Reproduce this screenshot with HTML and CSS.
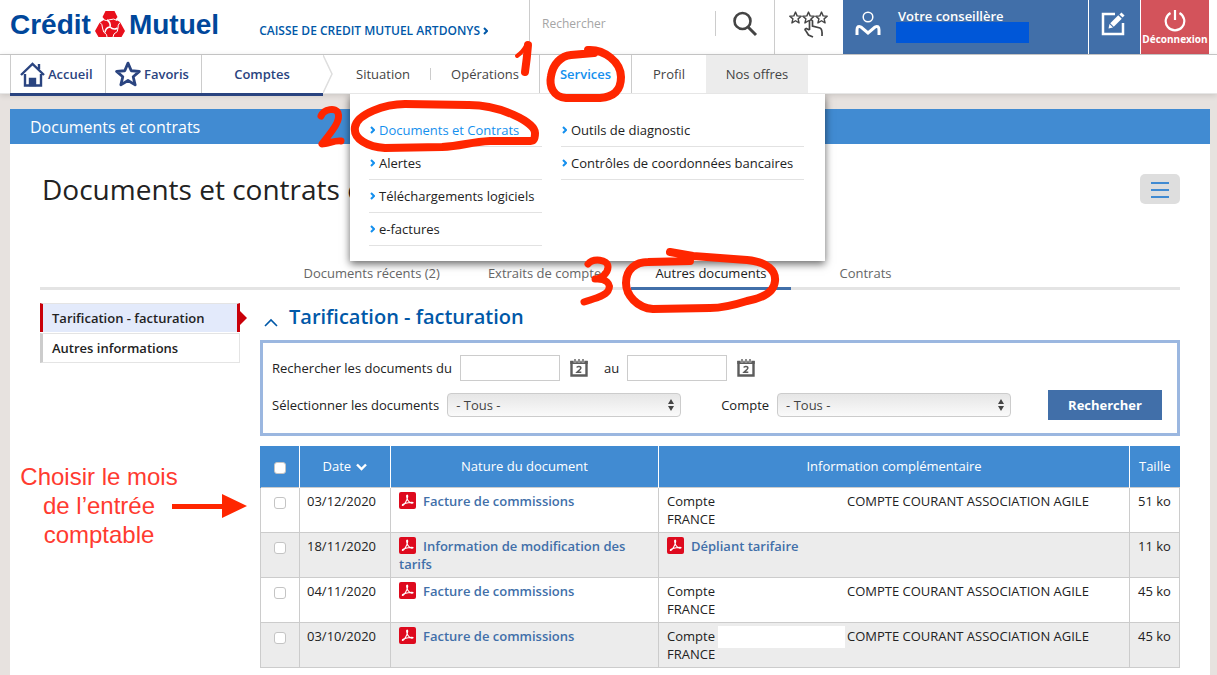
FILE: index.html
```html
<!DOCTYPE html>
<html lang="fr">
<head>
<meta charset="utf-8">
<title>Documents et contrats</title>
<link rel="stylesheet" href="styles.css">
</head>
<body>
<svg class="defs" aria-hidden="true">
  <symbol id="pdf" viewBox="0 0 17 17"><rect width="17" height="17" rx="2" fill="#de0a1e"/><path d="M3.4 13.4C2.6 12.4 7.600 10.600 12.800 10.300C15 10.300 14 11.800 12 10.900C9.800 9.800 7.800 6.600 7.600 4.200C7.600 2.600 8.900 2.800 8.700 4.600C8.500 7 5.400 13.800 3.400 13.400Z" fill="none" stroke="#fff" stroke-width="1.1"/></symbol>
  <symbol id="cal" viewBox="0 0 18 18"><path d="M1.500 3H16.500V16.500H1.500Z" fill="none" stroke="#5c5c5c" stroke-width="2.400"/><path d="M0.300 2H17.700V5H0.300Z" fill="#5c5c5c"/><path d="M5 0V3.500M9 0V3.500M13 0V3.500" stroke="#fff" stroke-width="2.600"/><path d="M5 0V3.500M9 0V3.500M13 0V3.500" stroke="#5c5c5c" stroke-width="1.400"/><path d="M6.800 8.600C7.300 7 11 7 10.800 9.200C10.700 10.500 8 12 7 13.200H11.300" fill="none" stroke="#5c5c5c" stroke-width="1.600"/></symbol>
  <symbol id="updown" viewBox="0 0 8 12"><path d="M4 0L7 5H1ZM4 12L7 7H1Z" fill="#444"/></symbol>
  <symbol id="chev" viewBox="0 0 5 8"><path d="M1 1L4 4L1 7" fill="none" stroke="currentColor" stroke-width="2"/></symbol>
  <symbol id="star" viewBox="0 0 24 24"><path d="M12 2L15 9L22.500 9.600L16.800 14.500L18.600 22L12 18L5.400 22L7.200 14.500L1.500 9.600L9 9Z" fill="none" stroke="currentColor" stroke-width="2.600" stroke-linejoin="round"/></symbol>
</svg>

<header class="top">
  <a class="logo" href="#" aria-label="Crédit Mutuel">
    <span>Crédit</span>
    <svg width="30" height="26" viewBox="0 0 30 26" aria-hidden="true"><path d="M10.500 0H19.500L22.500 6L20.500 8.500L25 11L30 20L26.500 26H3.500L0 20L5 11L9.500 8.500L7.500 6Z" fill="#e8101c"/><path d="M15 16Q16 11.500 12 9M15 16Q10.500 16.500 10 21.500M15 16Q18.500 19.500 22.500 17" fill="none" stroke="#fff" stroke-width="1.500"/><path d="M4.500 11.500L8 8.500Q11 10.500 15 8.700Q19 7 22 9.500M25 11.500Q22.500 14 23 17Q23.500 21 19 23L18 26M12 26L11.500 23.500Q8 22 7.500 17Q7.500 13 5 11.500" fill="none" stroke="#fff" stroke-width="1"/></svg>
    <span>Mutuel</span>
  </a>
  <a class="agency" href="#">CAISSE DE CREDIT MUTUEL ARTDONYS <svg width="5" height="8"><use href="#chev"/></svg></a>
  <form class="search">
    <input type="text" placeholder="Rechercher" aria-label="Rechercher">
    <button type="button" aria-label="Lancer la recherche"><svg width="26" height="26" viewBox="0 0 26 26"><circle cx="10.500" cy="10" r="8" fill="none" stroke="#444" stroke-width="2.600"/><path d="M16 16L24 24" stroke="#444" stroke-width="3"/></svg></button>
  </form>
  <a class="rate" href="#" aria-label="Avis"><svg width="40" height="28" viewBox="0 0 40 28"><g color="#444"><use href="#star" width="13" height="13"/><use href="#star" x="13" width="13" height="13"/><use href="#star" x="26" width="13" height="13"/></g><path d="M20.500 19V10Q22 7.500 23.500 10V15L31 17Q33.500 18 33 25M20.500 19L17 17.500Q15 18 17 20L19.500 24L24 26" fill="#fff" stroke="#444" stroke-width="1.700"/></svg></a>
  <a class="advisor" href="#">
    <svg width="26" height="26" viewBox="0 0 26 26" fill="none" stroke="#fff"><circle cx="13" cy="6" r="4.800" stroke-width="1.500"/><path d="M2 24V19Q2 14 6 16L13 22L20 16Q24 14 24 19V24" stroke-width="3"/></svg>
    <span><span class="advisor-label">Votre conseillère</span><span class="mask-blue"></span></span>
  </a>
  <a class="edit" href="#" aria-label="Écrire"><svg width="24" height="24" viewBox="0 0 24 24" fill="none" stroke="#fff"><path d="M14 2H2V22H22V11" stroke-width="2.500"/><path d="M11 13L19 5" stroke-width="5"/><path d="M7.500 16.500L8.500 12L12 15.500Z" fill="#fff" stroke="none"/><path d="M20 4L22 2" stroke-width="4.500"/></svg></a>
  <a class="logout" href="#"><svg width="22" height="22" viewBox="0 0 22 22" fill="none" stroke="#fff" stroke-width="2.200"><path d="M6.500 3A9.300 9.300 0 1 0 15.500 3M11 0V10"/></svg><span>Déconnexion</span></a>
</header>

<nav class="nav">
  <div class="nav-main">
    <a class="home" href="#"><svg width="25" height="25" viewBox="0 0 25 25" fill="none" stroke="#2a4480" stroke-width="2.400"><path d="M1 13L12.500 2L24 13M5 12V23.500H21V12M19 7V2"/><path d="M10 23V17H15V23Z" fill="#2a4480"/></svg>Accueil</a>
    <a class="fav" href="#"><svg width="26" height="26"><use href="#star"/></svg>Favoris</a>
    <a class="accounts" href="#">Comptes</a>
  </div>
  <svg class="nav-arrow" width="12" height="38" viewBox="0 0 12 38" aria-hidden="true"><path d="M0 0L9 19L0 38Z" fill="#fff"/><path d="M0 0L9 19L0 38" fill="none" stroke="#dedede" stroke-width="1.500"/></svg>
  <a class="situation" href="#">Situation</a>
  <a class="operations" href="#">Opérations</a>
  <div class="services">
    <a href="#">Services</a>
    <div class="mega">
      <ul>
        <li><a class="current" href="#"><svg width="5" height="8"><use href="#chev"/></svg>Documents et Contrats</a></li>
        <li><a href="#"><svg width="5" height="8"><use href="#chev"/></svg>Alertes</a></li>
        <li><a href="#"><svg width="5" height="8"><use href="#chev"/></svg>Téléchargements logiciels</a></li>
        <li><a href="#"><svg width="5" height="8"><use href="#chev"/></svg>e-factures</a></li>
      </ul>
      <ul>
        <li><a href="#"><svg width="5" height="8"><use href="#chev"/></svg>Outils de diagnostic</a></li>
        <li><a href="#"><svg width="5" height="8"><use href="#chev"/></svg>Contrôles de coordonnées bancaires</a></li>
      </ul>
    </div>
  </div>
  <a class="profile" href="#">Profil</a>
  <a class="offers" href="#">Nos offres</a>
</nav>

<main class="page">
  <div class="crumb">Documents et contrats</div>
  <div class="content">
    <div class="title-row">
      <h1>Documents et contrats e</h1>
      <button class="menu" type="button" aria-label="Menu"><svg width="18" height="18" viewBox="0 0 18 18"><path d="M0 2H18M0 9H18M0 16H18" stroke="#418bd2" stroke-width="2"/></svg></button>
    </div>
    <div class="tabs">
      <a href="#">Documents récents (2)</a>
      <a href="#">Extraits de comptes</a>
      <a class="active" href="#">Autres documents</a>
      <a href="#">Contrats</a>
    </div>
    <div class="columns">
      <aside class="side">
        <a class="active" href="#">Tarification - facturation</a>
        <a href="#">Autres informations</a>
        <p class="note">Choisir le mois<br>de l’entrée<br>comptable</p>
      </aside>
      <section class="main">
        <h2><svg width="14" height="9" viewBox="0 0 14 9"><path d="M1 8L7 2L13 8" fill="none" stroke="#0058a8" stroke-width="1.600"/></svg>Tarification - facturation</h2>
        <form class="filter">
          <div class="row">
            <label for="from">Rechercher les documents du</label>
            <input id="from" type="text">
            <button class="cal" type="button" aria-label="Date de début"><svg width="18" height="18"><use href="#cal"/></svg></button>
            <label class="to" for="to">au</label>
            <input id="to" type="text">
            <button class="cal" type="button" aria-label="Date de fin"><svg width="18" height="18"><use href="#cal"/></svg></button>
          </div>
          <div class="row">
            <label for="docs">Sélectionner les documents</label>
            <span class="select"><select id="docs"><option>- Tous -</option></select><svg width="8" height="12"><use href="#updown"/></svg></span>
            <label class="account" for="account">Compte</label>
            <span class="select"><select id="account"><option>- Tous -</option></select><svg width="8" height="12"><use href="#updown"/></svg></span>
            <button class="submit" type="button">Rechercher</button>
          </div>
        </form>
        <table>
          <colgroup><col class="c-check"><col class="c-date"><col class="c-kind"><col><col class="c-size"></colgroup>
          <thead><tr>
            <th><input type="checkbox" aria-label="Tout sélectionner"></th>
            <th>Date <svg class="sort" width="11" height="8" viewBox="0 0 11 8"><path d="M1 1.500L5.500 6L10 1.500" fill="none" stroke="#fff" stroke-width="2.400"/></svg></th>
            <th>Nature du document</th><th>Information complémentaire</th><th>Taille</th>
          </tr></thead>
          <tbody>
            <tr><td><input type="checkbox" aria-label="03/12/2020"></td><td>03/12/2020</td><td><a href="#"><svg class="pdf"><use href="#pdf"/></svg>Facture de commissions</a></td><td>Compte<span class="gap"></span>COMPTE COURANT ASSOCIATION AGILE<br>FRANCE</td><td>51 ko</td></tr>
            <tr><td><input type="checkbox" aria-label="18/11/2020"></td><td>18/11/2020</td><td><a href="#"><svg class="pdf"><use href="#pdf"/></svg>Information de modification des tarifs</a></td><td><a href="#"><svg class="pdf"><use href="#pdf"/></svg>Dépliant tarifaire</a></td><td>11 ko</td></tr>
            <tr><td><input type="checkbox" aria-label="04/11/2020"></td><td>04/11/2020</td><td><a href="#"><svg class="pdf"><use href="#pdf"/></svg>Facture de commissions</a></td><td>Compte<span class="gap"></span>COMPTE COURANT ASSOCIATION AGILE<br>FRANCE</td><td>45 ko</td></tr>
            <tr><td><input type="checkbox" aria-label="03/10/2020"></td><td>03/10/2020</td><td><a href="#"><svg class="pdf"><use href="#pdf"/></svg>Facture de commissions</a></td><td>Compte<span class="gap masked"></span>COMPTE COURANT ASSOCIATION AGILE<br>FRANCE</td><td>45 ko</td></tr>
          </tbody>
        </table>
      </section>
    </div>
  </div>
</main>

<svg class="marks" width="1217" height="675" viewBox="0 0 1217 675" aria-hidden="true">
  <g fill="none" stroke="#ff2600" stroke-width="8" stroke-linecap="round" stroke-linejoin="round">
    <path d="M517 56Q523 52 527 44" stroke-width="4"/>
    <path d="M528 45Q527 58 525 72"/>
    <path d="M588 50C604 49 621 62 621 77C621 92 612 97 600 98H566C553 97 549 86 551 76C553 64 561 56 571 55L594 53"/>
    <path d="M469 105C500 105 535 122 535 133C535 141 533 141 528 141H490C470 142 462 146 442 147L385 148C368 147 353 139 355 127C357 114 385 104 405 104L468 105"/>
    <path d="M321 116C324 109 336 107 338 113C341 121 332 131 322 144C328 144 335 140 341 141" stroke-width="7"/>
    <path d="M588 264C593 258 608 259 608 267C608 274 600 279 595 279C606 278 612 284 608 291C604 297 592 299 584 302" stroke-width="7"/>
    <path d="M670 252L693 256L747 260C768 262 776 271 775 281C774 294 758 299 747 301Q725 308 710 308L653 309C637 308 626 295 626 283C626 269 636 262 648 262L690 261"/>
  </g>
  <path d="M172 504H222V494L247 506L222 518V509H172Z" fill="#ff2600"/>
</svg>
</body>
</html>
```

FILE: styles.css
```css
* { box-sizing: border-box; }
body { margin: 0; min-height: 100vh; display: flex; flex-direction: column; position: relative; background: #e7e2df; font: 13px/18px "Open Sans", "Noto Sans", sans-serif; color: #222; }
a { color: inherit; text-decoration: none; }
button, input, select { font: inherit; color: inherit; margin: 0; }
button { padding: 0; border: 0; background: none; }
svg { flex: none; }
ul { list-style: none; margin: 0; padding: 0; }
.defs { position: absolute; width: 0; height: 0; }

.top { display: flex; height: 55px; padding: 0 8px 0 10px; background: #fff; border-bottom: 1px solid #ccc; }
.logo { display: flex; align-items: center; gap: 4px; color: #00479b; font: bold 28px/32px "Liberation Sans", Arial, sans-serif; padding-bottom: 4px; }
.logo svg { margin-bottom: 2px; }
.agency { color: #0058a8; font-weight: 600; font-size: 12px; margin: 22px auto 0 40px; white-space: nowrap; }
.search { display: flex; width: 245px; border-left: 1px solid #ccc; padding: 11px 0; height: 47px; }
.search input { flex: 1; min-width: 0; border: 0; border-right: 1px solid #ccc; padding: 0 12px; font-size: 12px; outline: 0; }
.search input::placeholder { color: #a5a5a5; opacity: 1; }
.search button { width: 58px; }
.rate { width: 69px; border-left: 1px solid #ccc; padding: 11px 14px; }
.advisor { display: flex; gap: 15px; width: 245px; padding: 11px 12px; background: #416fa9; color: #fff; font-weight: 600; line-height: 11px; }
.advisor-label { display: block; padding-left: 2px; }
.mask-blue { display: block; position: relative; width: 133px; height: 21px; background: #0057d8; }
.edit { width: 52px; background: #416fa9; padding: 12px 13px; box-shadow: inset 1px 0 #fff; }
.logout { display: flex; flex-direction: column; align-items: center; width: 69px; border-left: 1px solid #fff; background: #d3535b; color: #fff; font: bold 10px/14px "Open Sans", sans-serif; padding-top: 10px; }

.nav { display: flex; height: 39px; padding-left: 10px; background: #fff; border-bottom: 1px solid #e6e6e6; box-shadow: 0 1px 6px rgba(0,0,0,.14); text-align: center; line-height: 38px; color: #444; position: relative; }
.nav-main { display: flex; height: 41px; border-bottom: 3px solid #2a4480; color: #2a4480; font-weight: 600; background: #fff; }
.nav-main a { border-left: 1px solid #ccc; }
.home, .fav { display: flex; align-items: center; gap: 3px; padding-left: 9px; width: 95px; }
.fav { width: 96px; }
.accounts { width: 121px; }
.nav-main { width: 313px; }
.situation { width: 96px; background: linear-gradient(#ccc, #ccc) right center / 1px 12px no-repeat; }
.operations { width: 108px; }
.services { width: 93px; position: relative; border: 1px solid #ccc; border-width: 0 1px; color: #1590ee; font-weight: 600; }
.profile { width: 74px; }
.offers { width: 102px; background: #ececec; }
.mega { position: absolute; z-index: 2; left: -190px; top: 39px; width: 475px; height: 167px; padding: 20px 19px; display: flex; gap: 19px; background: #fff; box-shadow: 0 3px 8px rgba(0,0,0,.6); clip-path: inset(0 -20px -20px -20px); color: #222; font-weight: 400; text-align: left; line-height: 32px; }
.mega ul { width: 243px; }
.mega ul:first-child { width: 173px; }
.mega li { border-bottom: 1px solid #e2e2e2; white-space: nowrap; }
.mega svg { color: #1590ee; margin: 0 4px 1px 1px; }
.mega .current { color: #1590ee; }

.page { flex: 1; margin: 15px 7px 0 10px; background: #fff; }
.crumb { height: 35px; padding-left: 20px; background: #418bd2; color: #fff; font-size: 16px; line-height: 36px; }
.content { padding: 30px 30px 7px; }
.title-row { display: flex; justify-content: space-between; padding-left: 2px; height: 84px; }
h1 { margin: 0; font-size: 28px; line-height: 30px; font-weight: 400; }
.menu { width: 40px; height: 30px; border-radius: 5px; background: #dedede; padding-top: 5px; }
.tabs { display: flex; justify-content: center; height: 32px; border-bottom: 3px solid #e4e4e4; color: #666; line-height: 30px; text-align: center; }
.tabs a { min-width: 150px; height: 32px; padding: 0 24px; }
.tabs .active { border-bottom: 3px solid #416fa9; color: #222; }
.columns { display: flex; gap: 20px; padding-top: 13px; }
.side { width: 200px; position: relative; font-weight: 600; line-height: 28px; }
.side > a { display: block; height: 30px; margin-bottom: 1px; padding-left: 9px; border: 1px solid #e4e4e4; border-left: 3px solid #ccc; }
.side > .active { height: 29px; position: relative; background: #e3eafb; border-left-color: #c90009; border-right: 3px solid #c90009; border-bottom: 0; }
.side > .active::after { content: ""; position: absolute; right: -10px; top: 7px; border: 7px solid transparent; border-left-color: #c90009; border-right: 0; }
.note { position: absolute; top: 159px; left: -41px; width: 200px; margin: 0; text-align: center; color: #ff3b30; font: 24px/29px "Liberation Sans", Arial, sans-serif; }
.main { flex: 1; min-width: 0; }
h2 { display: flex; align-items: center; gap: 11px; margin: 0 0 9px 4px; font-size: 20px; line-height: 28px; font-weight: 600; color: #0058a8; }
h2 svg { margin-top: 10px; }
.filter { border: 3px solid #9bb7e0; padding: 10px 15px 13px 9px; margin-bottom: 10px; }
.row { display: flex; align-items: center; height: 30px; }
.row + .row { margin-top: 7px; }
.row label { margin-right: 8px; white-space: nowrap; }
.row input { width: 100px; height: 26px; border: 1px solid #ccc; }
.cal { width: 18px; height: 18px; margin-left: 10px; }
.row .to { margin-left: 16px; }
.row .account { margin-left: 40px; }
.select { display: flex; align-items: center; position: relative; width: 234px; }
.select select { width: 100%; height: 24px; padding: 0 8px; appearance: none; border: 1px solid #ccc; border-radius: 4px; color: #444; background: linear-gradient(#e6e6e6, #fafafa); }
.select svg { position: absolute; right: 6px; }
.submit { width: 114px; height: 30px; margin-left: auto; background: #416fa9; color: #fff; font-weight: 700; }

table { width: 100%; border-collapse: collapse; table-layout: fixed; }
.c-check { width: 39px; } .c-date { width: 91px; } .c-kind { width: 268px; } .c-size { width: 50px; }
th { height: 41px; padding: 0; background: #418bd2; color: #fff; font-weight: 500; border-left: 1px solid #fff; }
th:first-child { border-left-color: #418bd2; }
td { height: 45px; padding: 4px 7px 4px 8px; vertical-align: top; border: 1px solid #ccc; white-space: nowrap; }
td:nth-child(2) { padding-left: 7px; }
td:nth-child(3) { white-space: normal; }
td:first-child, th:first-child { text-align: center; padding: 4px 0 0; }
tbody tr:nth-child(even) { background: #ececec; }
td a { color: #416fa9; font-weight: 600; }
.pdf { width: 17px; height: 17px; margin: -3px 7px -2px 0; vertical-align: -1px; }
.sort { margin-left: 2px; }
td:first-child input { margin-top: 5px; }
th input { margin-top: 3px; }
table input { appearance: none; width: 12px; height: 12px; border: 1px solid #c4c4c4; border-radius: 3px; background: #fff; vertical-align: top; }
.gap { display: inline-block; width: 127px; height: 22px; margin: -4px 2px -4px 3px; vertical-align: middle; }
.masked { background: #fff; }
.marks { position: absolute; z-index: 3; left: 0; top: 0; pointer-events: none; }
```
